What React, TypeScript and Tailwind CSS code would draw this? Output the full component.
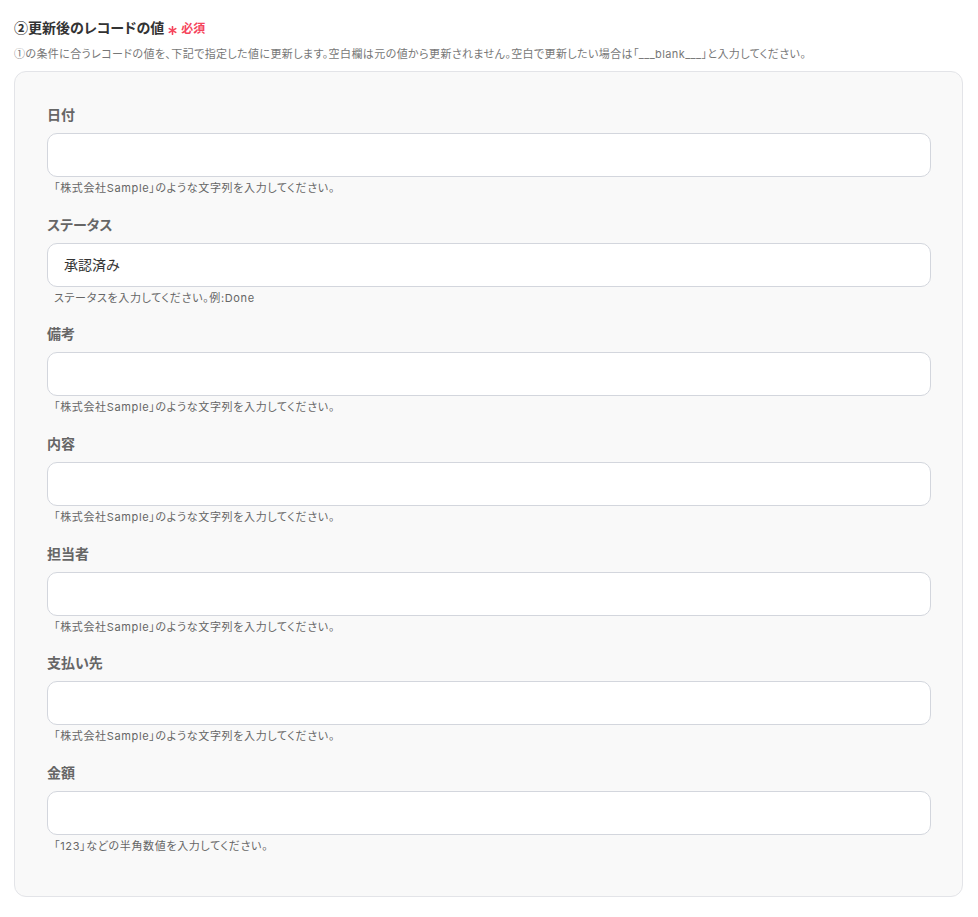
import React from 'react';

type Field = {
  label: string;
  value?: string;
  hint: string;
};

const fields: Field[] = [
  { label: '日付', hint: '「株式会社Sample」のような文字列を入力してください。' },
  { label: 'ステータス', value: '承認済み', hint: 'ステータスを入力してください。例:Done' },
  { label: '備考', hint: '「株式会社Sample」のような文字列を入力してください。' },
  { label: '内容', hint: '「株式会社Sample」のような文字列を入力してください。' },
  { label: '担当者', hint: '「株式会社Sample」のような文字列を入力してください。' },
  { label: '支払い先', hint: '「株式会社Sample」のような文字列を入力してください。' },
  { label: '金額', hint: '「123」などの半角数値を入力してください。' },
];

const cjk = { fontFamily: '"Noto Sans CJK JP", sans-serif' };

const FieldRow: React.FC<{ field: Field }> = ({ field }) => {
  return (
    <div className="flex flex-col">
      <label className="text-[14px] leading-5 font-bold text-[#666]">{field.label}</label>
      <div className="mt-2 h-11 w-full rounded-[10px] border border-[#d3d6dd] bg-white flex items-center px-4">
        <span className="text-[14px] text-[#333]">{field.value}</span>
      </div>
      <p className="mt-[3px] text-[11px] leading-4 text-[#666] pl-[7px] tracking-[0.65px]">{field.hint}</p>
    </div>
  );
};

const App: React.FC = () => {
  return (
    <div
      className="min-h-screen bg-white pl-[14px] pr-[15px] pt-[17px] pb-5 [font-feature-settings:'palt']"
      style={{ fontFamily: 'Inter, "Noto Sans CJK JP", "Noto Sans", sans-serif' }}
    >
      <div className="flex items-center h-5">
        <h2 className="text-[14px] leading-5 font-bold text-[#333]">
          <span style={cjk}>②</span>更新後のレコードの値
        </h2>
        <svg className="ml-[4px] mt-[7px]" width="9" height="9" viewBox="0 0 10 10" fill="none" stroke="#f5455c" strokeWidth="1.8" strokeLinecap="round">
          <line x1="5" y1="0.8" x2="5" y2="9.2" />
          <line x1="1.4" y1="2.9" x2="8.6" y2="7.1" />
          <line x1="1.4" y1="7.1" x2="8.6" y2="2.9" />
        </svg>
        <span className="ml-[4px] mt-[4px] text-[12px] leading-5 font-bold text-[#f5455c]">必須</span>
      </div>
      <p className="mt-2 h-4 text-[11px] leading-4 text-[#777] tracking-[0.4px]">
        <span style={cjk}>①</span>の条件に合うレコードの値を、下記で指定した値に更新します。空白欄は元の値から更新されません。空白で更新したい場合は「___blank___」と入力してください。
      </p>
      <div className="mt-[10px] rounded-[12px] border border-[#e3e4e8] bg-[#f9f9f9] pl-[32px] pr-[31px] pt-[33px] pb-[42px] flex flex-col gap-[18.7px]">
        {fields.map((f) => (
          <FieldRow key={f.label} field={f} />
        ))}
      </div>
    </div>
  );
};

export default App;
